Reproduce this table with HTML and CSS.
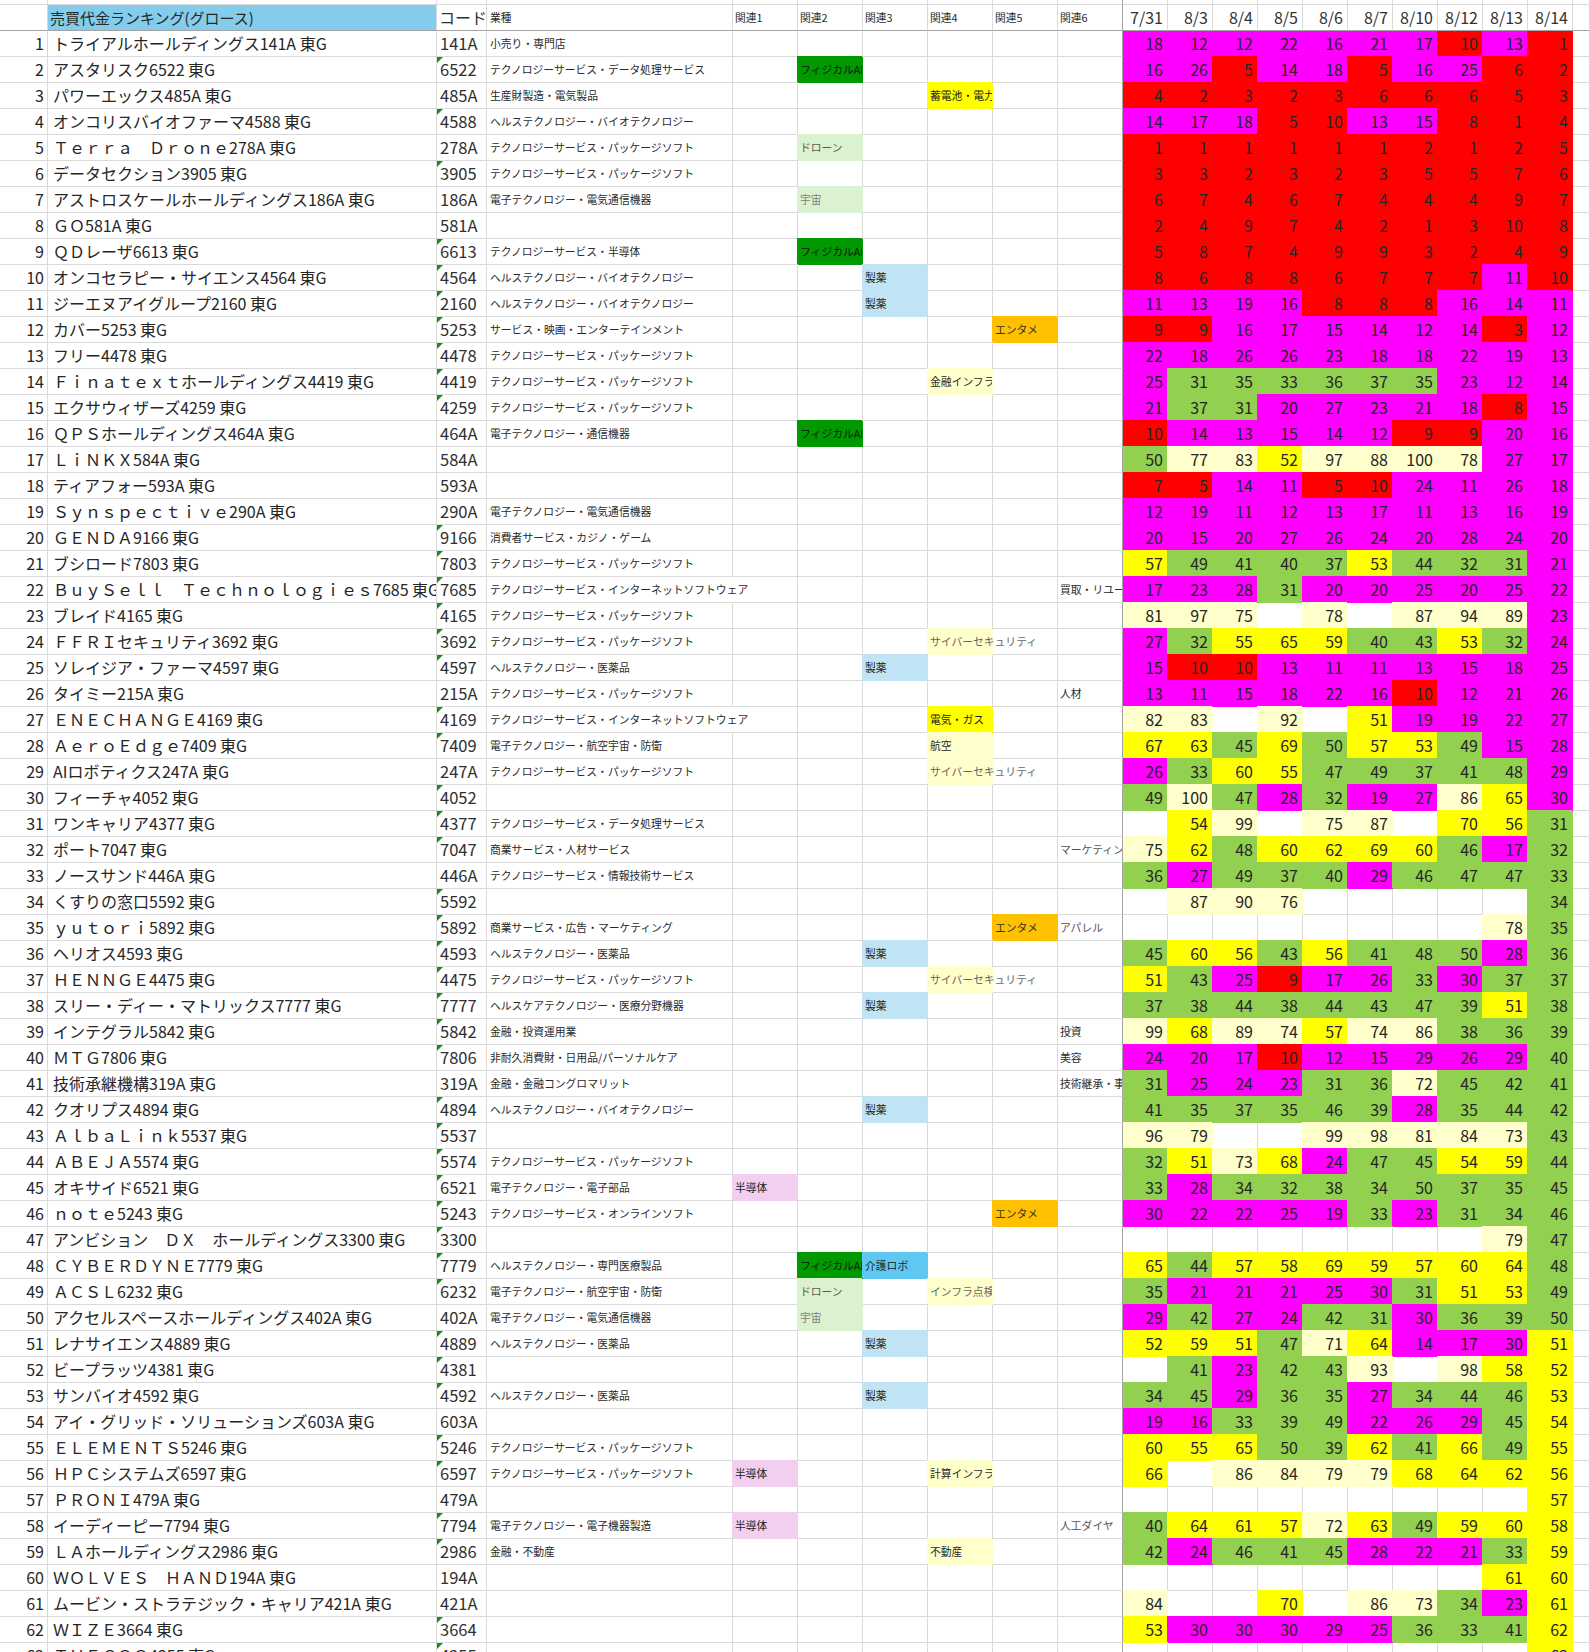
FILE: index.html
```html
<!DOCTYPE html>
<html lang="ja">
<head>
<meta charset="utf-8">
<title>売買代金ランキング(グロース)</title>
<link rel="stylesheet" href="styles.css">
</head>
<body>
<div class="sheet">
  <div class="row strip">
    <div class="c"></div><div class="c"></div><div class="c"></div><div class="c"></div>
    <div class="c"></div><div class="c"></div><div class="c"></div><div class="c"></div><div class="c"></div><div class="c fz"></div>
    <div class="c"></div><div class="c"></div><div class="c"></div><div class="c"></div><div class="c"></div>
    <div class="c"></div><div class="c"></div><div class="c"></div><div class="c"></div><div class="c"></div>
    <div class="c"></div>
  </div>
  <div class="row head">
    <div class="c"></div>
    <div class="c nm title">売買代金ランキング(グロース)</div>
    <div class="c cd hcode">コード</div>
    <div class="c ind">業種</div>
    <div class="c rl">関連1</div>
    <div class="c rl">関連2</div>
    <div class="c rl">関連3</div>
    <div class="c rl">関連4</div>
    <div class="c rl">関連5</div>
    <div class="c rl fz">関連6</div>
    <div class="c num">7/31</div>
    <div class="c num">8/3</div>
    <div class="c num">8/4</div>
    <div class="c num">8/5</div>
    <div class="c num">8/6</div>
    <div class="c num">8/7</div>
    <div class="c num">8/10</div>
    <div class="c num">8/12</div>
    <div class="c num">8/13</div>
    <div class="c num">8/14</div>
    <div class="c"></div>
  </div>
  <div class="rows" id="rows"></div>
</div>
<script src="script.js"></script>
</body>
</html>
```

FILE: styles.css
```css
* { box-sizing: border-box; }
html, body { margin: 0; padding: 0; background: #fff; }
body {
  font-family: "Noto Sans CJK JP", "Noto Sans", sans-serif;
  color: #262626;
  overflow: hidden;
}
.sheet { width: 1590px; height: 1652px; overflow: hidden; }
.row {
  display: grid;
  grid-template-columns: 48px 389px 50px 246px repeat(6, 65px) repeat(10, 45px) 17px;
  height: 26px;
}
.strip { height: 5px; }
.head { height: 26px; }
.c {
  position: relative;
  border-right: 1px solid #dadada;
  border-bottom: 1px solid #dadada;
  overflow: hidden;
  white-space: nowrap;
  line-height: 25px;
  font-size: 16px;
}
.head .c { border-bottom-color: #a3a3a3; line-height: 25px; }
.c.fz { border-right-color: #a3a3a3; }

.n { text-align: right; padding-right: 3px; }
.nm { padding-left: 5px; }
.cd { padding-left: 3px; font-size: 16.5px; color: #303030; }
.ind { padding-left: 3px; font-size: 10.8px; color: #2a2a2a; }
.ind.ov { overflow: visible; border-right-color: transparent; }
.rl { padding-left: 2px; font-size: 10.8px; color: #2a2a2a; }
.rl.ov { overflow: visible; }
.num { text-align: right; padding-right: 4px; }
.head .num { color: #333; }
.title { background: #83cceb; font-size: 15px; padding-left: 2px; }
.hcode { font-size: 16px; padding-left: 2px; }

.tri::before {
  content: "";
  position: absolute;
  left: 0;
  top: 0;
  border-top: 6px solid #1f8a1f;
  border-right: 6px solid transparent;
}

/* filled cells hide the gridlines around them */
.fill {
  background: var(--bg);
  border-color: var(--bg);
  box-shadow: -1px -1px 0 var(--bg);
}
.fill.d0 { box-shadow: 0 -1px 0 var(--bg); }
.first .fill { box-shadow: -1px 0 0 var(--bg); }
.first .fill.d0 { box-shadow: none; }

.red { --bg: #ff0000; }
.mag { --bg: #ff00ff; }
.grn { --bg: #92d050; }
.yel { --bg: #ffff00; }
.lye { --bg: #ffffcc; }

.t-phys { --bg: #009a00; color: #111; }
.t-drone { --bg: #daf2d0; color: #5a5a5a; }
.t-space { --bg: #daf2d0; color: #808080; }
.t-pharma { --bg: #c1e4f5; color: #222; }
.t-care { --bg: #5ec8f2; color: #222; }
.t-ent { --bg: #ffc000; color: #333; }
.t-ly { --bg: #ffffcc; color: #2a2a2a; }
.t-lyg { --bg: #ffffcc; color: #666; }
.t-y { --bg: #ffff00; color: #222; }
.t-semi { --bg: #f2ceef; color: #222; }
.t-gray { color: #555; }
```

FILE: script.js
```js
(function () {
  var TP = "テクノロジーサービス・パッケージソフト";
  var HB = "ヘルステクノロジー・バイオテクノロジー";
  var HM = "ヘルステクノロジー・医薬品";
  var EC = "電子テクノロジー・電気通信機器";
  var EA = "電子テクノロジー・航空宇宙・防衛";
  var TI = "テクノロジーサービス・インターネットソフトウェア";
  var PH = [2, "フィジカルAI", "t-phys fill"];
  var MD = [3, "製薬", "t-pharma fill"];
  var EN = [5, "エンタメ", "t-ent fill"];
  var SE = [1, "半導体", "t-semi fill"];
  var CY = [4, "サイバーセキュリティ", "t-lyg fill ov"];

  var R = [
    ["トライアルホールディングス141A 東G", "141A", "小売り・専門店", [], "18 12 12 22 16 21 17 10 13"],
    ["アスタリスク6522 東G", "6522", "テクノロジーサービス・データ処理サービス", [PH], "16 26 5 14 18 5 16 25 6"],
    ["パワーエックス485A 東G", "485A", "生産財製造・電気製品", [[4, "蓄電池・電力", "t-y fill"]], "4 2 3 2 3 6 6 6 5"],
    ["オンコリスバイオファーマ4588 東G", "4588", HB, [], "14 17 18 5 10 13 15 8 1"],
    ["Ｔｅｒｒａ　Ｄｒｏｎｅ278A 東G", "278A", TP, [[2, "ドローン", "t-drone fill"]], "1 1 1 1 1 1 2 1 2"],
    ["データセクション3905 東G", "3905", TP, [], "3 3 2 3 2 3 5 5 7"],
    ["アストロスケールホールディングス186A 東G", "186A", EC, [[2, "宇宙", "t-space fill"]], "6 7 4 6 7 4 4 4 9"],
    ["ＧＯ581A 東G", "581A", "", [], "2 4 9 7 4 2 1 3 10"],
    ["ＱＤレーザ6613 東G", "6613", "テクノロジーサービス・半導体", [PH], "5 8 7 4 9 9 3 2 4"],
    ["オンコセラピー・サイエンス4564 東G", "4564", HB, [MD], "8 6 8 8 6 7 7 7 11"],
    ["ジーエヌアイグループ2160 東G", "2160", HB, [MD], "11 13 19 16 8 8 8 16 14"],
    ["カバー5253 東G", "5253", "サービス・映画・エンターテインメント", [EN], "9 9 16 17 15 14 12 14 3"],
    ["フリー4478 東G", "4478", TP, [], "22 18 26 26 23 18 18 22 19"],
    ["Ｆｉｎａｔｅｘｔホールディングス4419 東G", "4419", TP, [[4, "金融インフラ", "t-ly fill"]], "25 31 35 33 36 37 35 23 12"],
    ["エクサウィザーズ4259 東G", "4259", TP, [], "21 37 31 20 27 23 21 18 8"],
    ["ＱＰＳホールディングス464A 東G", "464A", "電子テクノロジー・通信機器", [PH], "10 14 13 15 14 12 9 9 20"],
    ["ＬｉＮＫＸ584A 東G", "584A", "", [], "50 77 83 52 97 88 100 78 27"],
    ["ティアフォー593A 東G", "593A", "", [], "7 5 14 11 5 10 24 11 26"],
    ["Ｓｙｎｓｐｅｃｔｉｖｅ290A 東G", "290A", EC, [], "12 19 11 12 13 17 11 13 16"],
    ["ＧＥＮＤＡ9166 東G", "9166", "消費者サービス・カジノ・ゲーム", [], "20 15 20 27 26 24 20 28 24"],
    ["ブシロード7803 東G", "7803", TP, [], "57 49 41 40 37 53 44 32 31"],
    ["ＢｕｙＳｅｌｌ　Ｔｅｃｈｎｏｌｏｇｉｅｓ7685 東G", "7685", TI, [[6, "買取・リユース", ""]], "17 23 28 31 20 20 25 20 25"],
    ["ブレイド4165 東G", "4165", TP, [], "81 97 75 - 78 - 87 94 89"],
    ["ＦＦＲＩセキュリティ3692 東G", "3692", TP, [CY], "27 32 55 65 59 40 43 53 32"],
    ["ソレイジア・ファーマ4597 東G", "4597", HM, [MD], "15 10 10 13 11 11 13 15 18"],
    ["タイミー215A 東G", "215A", TP, [[6, "人材", ""]], "13 11 15 18 22 16 10 12 21"],
    ["ＥＮＥＣＨＡＮＧＥ4169 東G", "4169", TI, [[4, "電気・ガス", "t-y fill"]], "82 83 - 92 - 51 19 19 22"],
    ["ＡｅｒｏＥｄｇｅ7409 東G", "7409", EA, [[4, "航空", "t-ly fill"]], "67 63 45 69 50 57 53 49 15"],
    ["AIロボティクス247A 東G", "247A", TP, [CY], "26 33 60 55 47 49 37 41 48"],
    ["フィーチャ4052 東G", "4052", "", [], "49 100 47 28 32 19 27 86 65"],
    ["ワンキャリア4377 東G", "4377", "テクノロジーサービス・データ処理サービス", [], "- 54 99 - 75 87 - 70 56"],
    ["ポート7047 東G", "7047", "商業サービス・人材サービス", [[6, "マーケティング", "t-gray"]], "75 62 48 60 62 69 60 46 17"],
    ["ノースサンド446A 東G", "446A", "テクノロジーサービス・情報技術サービス", [], "36 27 49 37 40 29 46 47 47"],
    ["くすりの窓口5592 東G", "5592", "", [], "- 87 90 76 - - - - -"],
    ["ｙｕｔｏｒｉ5892 東G", "5892", "商業サービス・広告・マーケティング", [EN, [6, "アパレル", "t-gray"]], "- - - - - - - - 78"],
    ["ヘリオス4593 東G", "4593", HM, [MD], "45 60 56 43 56 41 48 50 28"],
    ["ＨＥＮＮＧＥ4475 東G", "4475", TP, [CY], "51 43 25 9 17 26 33 30 37"],
    ["スリー・ディー・マトリックス7777 東G", "7777", "ヘルスケアテクノロジー・医療分野機器", [MD], "37 38 44 38 44 43 47 39 51"],
    ["インテグラル5842 東G", "5842", "金融・投資運用業", [[6, "投資", ""]], "99 68 89 74 57 74 86 38 36"],
    ["ＭＴＧ7806 東G", "7806", "非耐久消費財・日用品/パーソナルケア", [[6, "美容", ""]], "24 20 17 10 12 15 29 26 29"],
    ["技術承継機構319A 東G", "319A", "金融・金融コングロマリット", [[6, "技術継承・事業承継", ""]], "31 25 24 23 31 36 72 45 42"],
    ["クオリプス4894 東G", "4894", HB, [MD], "41 35 37 35 46 39 28 35 44"],
    ["ＡｌｂａＬｉｎｋ5537 東G", "5537", "", [], "96 79 - - 99 98 81 84 73"],
    ["ＡＢＥＪＡ5574 東G", "5574", TP, [], "32 51 73 68 24 47 45 54 59"],
    ["オキサイド6521 東G", "6521", "電子テクノロジー・電子部品", [SE], "33 28 34 32 38 34 50 37 35"],
    ["ｎｏｔｅ5243 東G", "5243", "テクノロジーサービス・オンラインソフト", [EN], "30 22 22 25 19 33 23 31 34"],
    ["アンビション　ＤＸ　ホールディングス3300 東G", "3300", "", [], "- - - - - - - - 79"],
    ["ＣＹＢＥＲＤＹＮＥ7779 東G", "7779", "ヘルステクノロジー・専門医療製品", [PH, [3, "介護ロボ", "t-care fill"]], "65 44 57 58 69 59 57 60 64"],
    ["ＡＣＳＬ6232 東G", "6232", EA, [[2, "ドローン", "t-drone fill"], [4, "インフラ点検", "t-lyg fill"]], "35 21 21 21 25 30 31 51 53"],
    ["アクセルスペースホールディングス402A 東G", "402A", EC, [[2, "宇宙", "t-space fill"]], "29 42 27 24 42 31 30 36 39"],
    ["レナサイエンス4889 東G", "4889", HM, [MD], "52 59 51 47 71 64 14 17 30"],
    ["ビープラッツ4381 東G", "4381", "", [], "- 41 23 42 43 93 - 98 58"],
    ["サンバイオ4592 東G", "4592", HM, [MD], "34 45 29 36 35 27 34 44 46"],
    ["アイ・グリッド・ソリューションズ603A 東G", "603A", "", [], "19 16 33 39 49 22 26 29 45"],
    ["ＥＬＥＭＥＮＴＳ5246 東G", "5246", TP, [], "60 55 65 50 39 62 41 66 49"],
    ["ＨＰＣシステムズ6597 東G", "6597", TP, [SE, [4, "計算インフラ", "t-ly fill"]], "66 - 86 84 79 79 68 64 62"],
    ["ＰＲＯＮＩ479A 東G", "479A", "", [], "- - - - - - - - -"],
    ["イーディーピー7794 東G", "7794", "電子テクノロジー・電子機器製造", [SE, [6, "人工ダイヤ", "t-gray"]], "40 64 61 57 72 63 49 59 60"],
    ["ＬＡホールディングス2986 東G", "2986", "金融・不動産", [[4, "不動産", "t-ly fill"]], "42 24 46 41 45 28 22 21 33"],
    ["ＷＯＬＶＥＳ　ＨＡＮＤ194A 東G", "194A", "", [], "- - - - - - - - 61"],
    ["ムービン・ストラテジック・キャリア421A 東G", "421A", "", [], "84 - - 70 - 86 73 34 23"],
    ["ＷＩＺＥ3664 東G", "3664", "", [], "53 30 30 30 29 25 36 33 41"],
    ["ＴＨＥＣＯＯ4255 東G", "4255", "", [], "- - - - - - - - -"]
  ];

  function color(v) {
    if (v <= 10) return "red";
    if (v <= 30) return "mag";
    if (v <= 50) return "grn";
    if (v <= 70) return "yel";
    if (v <= 100) return "lye";
    return "";
  }

  var html = "";
  R.forEach(function (r, idx) {
    var i = idx + 1;
    var h = '<div class="row' + (i === 1 ? " first" : "") + '">';
    h += '<div class="c n">' + i + "</div>";
    h += '<div class="c nm">' + r[0] + "</div>";
    h += '<div class="c cd' + (/^\d+$/.test(r[1]) ? " tri" : "") + '">' + r[1] + "</div>";
    h += '<div class="c ind' + (r[2].length > 22 ? " ov" : "") + '">' + r[2] + "</div>";
    for (var k = 1; k <= 6; k++) {
      var tag = null;
      r[3].forEach(function (t) { if (t[0] === k) tag = t; });
      var cl = "c rl" + (tag && tag[2] ? " " + tag[2] : "") + (k === 6 ? " fz" : "");
      h += '<div class="' + cl + '">' + (tag ? tag[1] : "") + "</div>";
    }
    var vals = r[4].split(" ");
    vals.push(String(i));
    vals.forEach(function (s, j) {
      var cl = "c num" + (j === 0 ? " d0" : "");
      var txt = "";
      if (s !== "-") {
        var v = parseInt(s, 10);
        var col = color(v);
        if (col) cl += " fill " + col;
        txt = s;
      }
      h += '<div class="' + cl + '">' + txt + "</div>";
    });
    h += '<div class="c"></div>';
    h += "</div>";
    html += h;
  });
  document.getElementById("rows").innerHTML = html;
})();
```
